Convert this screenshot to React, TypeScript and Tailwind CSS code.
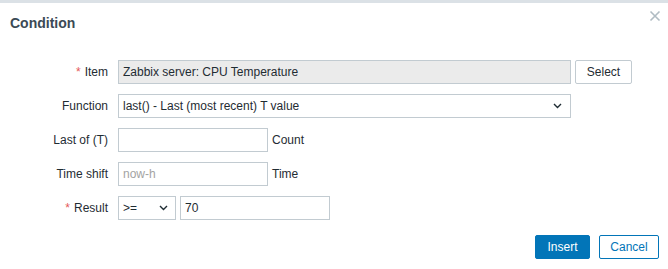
import React from "react";

const labelCls = "w-[108px] shrink-0 text-right text-[#1f2c33]";
const inputCls =
  "h-6 border border-[#c2cbd1] px-[4px] text-[12px] leading-[22px] text-[#1f2c33] outline-none";

function Chevron() {
  return (
    <svg width="9" height="6" viewBox="0 0 9 6" className="shrink-0">
      <path d="M1 1l3.5 3.5L8 1" fill="none" stroke="#1f2c33" strokeWidth="1.4" />
    </svg>
  );
}

function Required() {
  return <span className="mr-[4px] text-[#e45959]">*</span>;
}

export default function App() {
  return (
    <div
      className="h-[269px] w-[668px] overflow-hidden border-t-[3px] border-[#dbe1e6] bg-white text-[12px] text-[#1f2c33]"
      style={{ fontFamily: '"Liberation Sans", Arial, sans-serif' }}
    >
      <div className="flex items-start justify-between pl-[10px] pr-[6px]">
        <h2 className="pt-[12px] text-[14px] font-bold leading-[16px] text-[#3b4a55]">
          Condition
        </h2>
        <button type="button" className="mt-[6px] p-[1px]" aria-label="Close">
          <svg width="12" height="12" viewBox="0 0 12 12">
            <path d="M1.5 1.5l9 9M10.5 1.5l-9 9" stroke="#b0bcc3" strokeWidth="1.6" />
          </svg>
        </button>
      </div>

      <div className="mt-[29px] flex flex-col gap-[10px]">
        <div className="flex items-center gap-[10px]">
          <label className={labelCls}>
            <Required />
            Item
          </label>
          <div className="flex items-center gap-[4px]">
            <input
              readOnly
              value="Zabbix server: CPU Temperature"
              className={`${inputCls} w-[453px] bg-[#ebebeb]`}
            />
            <button
              type="button"
              className="h-6 w-[57px] rounded-[2px] border border-[#c2cbd1] bg-white text-[12px] text-[#1f2c33]"
            >
              Select
            </button>
          </div>
        </div>

        <div className="flex items-center gap-[10px]">
          <label className={labelCls}>Function</label>
          <div className={`${inputCls} flex w-[453px] items-center justify-between bg-white pr-[8px]`}>
            <span>last() - Last (most recent) T value</span>
            <Chevron />
          </div>
        </div>

        <div className="flex items-center gap-[10px]">
          <label className={labelCls}>Last of (T)</label>
          <div className="flex items-center gap-[4px]">
            <input className={`${inputCls} w-[150px] bg-white`} />
            <span>Count</span>
          </div>
        </div>

        <div className="flex items-center gap-[10px]">
          <label className={labelCls}>Time shift</label>
          <div className="flex items-center gap-[4px]">
            <input
              placeholder="now-h"
              className={`${inputCls} w-[150px] bg-white placeholder:text-[#a3a3a3]`}
            />
            <span>Time</span>
          </div>
        </div>

        <div className="flex items-center gap-[10px]">
          <label className={labelCls}>
            <Required />
            Result
          </label>
          <div className="flex items-center gap-[4px]">
            <div className={`${inputCls} flex w-[58px] items-center justify-between bg-white pr-[7px]`}>
              <span>&gt;=</span>
              <Chevron />
            </div>
            <input value="70" readOnly className={`${inputCls} w-[150px] bg-white`} />
          </div>
        </div>
      </div>

      <div className="mt-[15px] flex justify-end gap-[9px] pr-[9px]">
        <button
          type="button"
          className="h-6 w-[55px] rounded-[2px] border border-[#0275b8] bg-[#0275b8] text-[12px] text-white"
        >
          Insert
        </button>
        <button
          type="button"
          className="h-6 w-[60px] rounded-[2px] border border-[#0275b8] bg-white text-[12px] text-[#0275b8]"
        >
          Cancel
        </button>
      </div>
    </div>
  );
}
